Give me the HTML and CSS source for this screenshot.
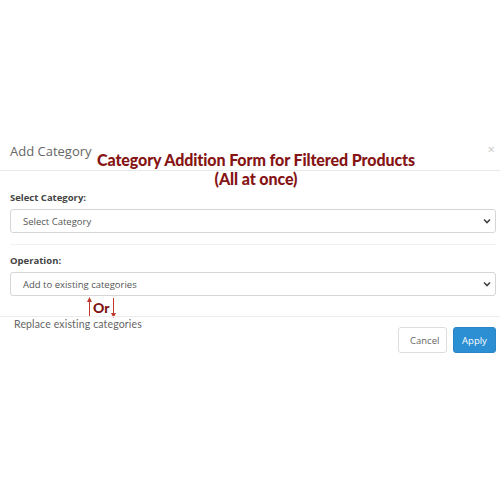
FILE: index.html
```html
<!DOCTYPE html>
<html>
<head>
<meta charset="utf-8">
<link rel="stylesheet" href="styles.css">
</head>
<body>
<div class="modal">
  <div class="header">
    <span class="title">Add Category</span>
    <span class="close">×</span>
    <div class="banner">Category Addition Form for Filtered Products<br>(All at once)</div>
  </div>
  <div class="body">
    <div class="group">
      <label class="label">Select Category:</label>
      <div class="select"><span>Select Category</span><svg width="8" height="6" viewBox="0 0 8 6"><path d="M1 1.5 L4 4.5 L7 1.5" fill="none" stroke="#444" stroke-width="1.6"/></svg></div>
    </div>
    <div class="group second">
      <label class="label">Operation:</label>
      <div class="select"><span>Add to existing categories</span><svg width="8" height="6" viewBox="0 0 8 6"><path d="M1 1.5 L4 4.5 L7 1.5" fill="none" stroke="#444" stroke-width="1.6"/></svg></div>
      <div class="or">
        <svg class="arr up" width="5" height="20" viewBox="0 0 5 20"><path d="M2.5 0 L0 5 L5 5 Z" fill="#c0392b"/><path d="M2.5 4 V20" stroke="#c0392b" stroke-width="1"/></svg>
        <span class="ortext">Or</span>
        <svg class="arr down" width="5" height="20" viewBox="0 0 5 20"><path d="M2.5 20 L0 15 L5 15 Z" fill="#c0392b"/><path d="M2.5 0 V16" stroke="#c0392b" stroke-width="1"/></svg>
      </div>
    </div>
  </div>
  <div class="footer">
    <span class="replace">Replace existing categories</span>
    <button class="btn cancel">Cancel</button>
    <button class="btn apply">Apply</button>
  </div>
</div>
</body>
</html>
```
FILE: styles.css
```css
html, body { margin: 0; padding: 0; background: #fff; }
body { font-family: "Open Sans", "Liberation Sans", sans-serif; width: 500px; height: 500px; overflow: hidden; }
.modal { margin-top: 135px; }
.header { position: relative; height: 35px; border-bottom: 1px solid #e8e8e8; display: flex; align-items: center; padding-left: 10px; }
.title { font-size: 13px; color: #666; margin-top: -3px; }
.close { position: absolute; right: 5px; top: 5px; font-size: 13px; color: #c8c8c8; }
.banner { position: absolute; left: 0; right: 0; top: 15px; text-align: center; padding-left: 12px; font-family: Lato, "Open Sans", sans-serif; font-weight: 900; font-size: 16px; line-height: 19px; color: #861414; letter-spacing: -0.1px; }
.body { padding: 0 4px 0 10px; }
.group { padding-top: 20px; padding-bottom: 11px; position: relative; }
.group.second { border-top: 1px solid #f0f0f0; padding-top: 9px; padding-bottom: 20px; }
.label { display: block; font-size: 9.5px; font-weight: 700; color: #444; line-height: 14px; margin-bottom: 4px; }
.select { height: 22px; border: 1px solid #d6d6d6; border-radius: 3px; display: flex; align-items: center; justify-content: space-between; padding: 0 4px 0 12px; font-size: 9.5px; color: #555; }
.or { position: absolute; left: 77px; top: 51px; display: flex; align-items: center; }
.arr.up { margin-top: 0; }
.arr.down { margin-top: 2px; }
.ortext { font-family: Lato, sans-serif; font-weight: 900; font-size: 14px; color: #7e1313; margin: 0 1px; }
.footer { position: relative; border-top: 1px solid #ececec; display: flex; justify-content: flex-end; gap: 6px; padding: 10px 4px 0 0; }
.replace { position: absolute; left: 14px; top: 1px; font-family: Lato, sans-serif; font-size: 10.5px; color: #666; letter-spacing: 0.15px; }
.btn { height: 26px; border-radius: 3px; font-family: "Open Sans", sans-serif; font-size: 9.5px; padding: 0 11px; }
.cancel { background: #fff; border: 1px solid #ddd; color: #666; width: 49px; }
.apply { background: #2c8fd3; border: 1px solid #2a86c6; color: #fff; width: 43px; padding: 0; }
```
